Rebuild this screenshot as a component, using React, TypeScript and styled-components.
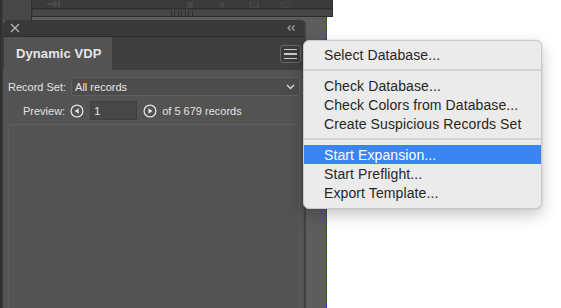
import React from "react";
import styled, { createGlobalStyle } from "styled-components";

const Global = createGlobalStyle`
  html, body { margin: 0; padding: 0; background: #ffffff; }
  body { font-family: "Liberation Sans", Arial, sans-serif; -webkit-font-smoothing: antialiased; }
`;

const Stage = styled.div`
  position: relative;
  width: 561px;
  height: 308px;
  overflow: hidden;
  display: flex;
  background: #ffffff;
`;

const LeftDock = styled.div`
  width: 3px;
  background: #383838;
  border-left: 1px solid #2c2c2c;
  box-sizing: border-box;
`;

const Pasteboard = styled.div`
  width: 323px;
  background: #5d5d5d;
  border-right: 1px dotted #1f1ff5;
`;

const Document = styled.div`
  flex: 1;
  background: #ffffff;
`;

/* top chrome: a docked window above the floating panel */
const TopChrome = styled.div`
  position: absolute;
  left: 3px;
  top: 0;
  display: flex;
  align-items: flex-start;
`;

const DockStub = styled.div`
  width: 28px;
  height: 20px;
  background: #474747;
  border-right: 1px solid #2e2e2e;
`;

const TopWindow = styled.div`
  width: 301px;
  height: 17px;
  display: flex;
  flex-direction: column;
  background: #3b3b3b;
  border-bottom: 1px solid #2d2d2d;
  border-right: 1px solid #2d2d2d;
  box-sizing: border-box;
`;

const TopToolbar = styled.div`
  height: 8px;
  display: flex;
  align-items: flex-end;
  padding-left: 14px;
  border-bottom: 1px solid #2e2e2e;
  overflow: hidden;
`;

const FaintIcon = styled.svg<{ $ml: number }>`
  margin-left: ${(p) => p.$ml}px;
  flex: none;
  display: block;
`;

const ScrollBar = styled.div`
  flex: 1;
  margin: 1px 0 0 1px;
  background: #474747;
  display: flex;
  justify-content: center;
  align-items: center;
`;

const Grip = styled.div`
  width: 24px;
  height: 5px;
  background: repeating-linear-gradient(
    to right,
    #2f2f2f 0px,
    #2f2f2f 1px,
    transparent 1px,
    transparent 3.5px
  );
`;

/* floating panel */
const Panel = styled.div`
  position: absolute;
  left: 3px;
  top: 20px;
  width: 303px;
  height: 300px;
  display: flex;
  flex-direction: column;
  background: #535353;
  border-radius: 5px 5px 0 0;
  border-right: 2px solid #414141;
  box-sizing: border-box;
  overflow: hidden;
  color: #e4e4e4;
  font-size: 11px;
`;

const PanelHeader = styled.div`
  height: 17px;
  flex: none;
  display: flex;
  align-items: center;
  justify-content: space-between;
  padding: 0 9px 0 7px;
  background: #393939;
  border-bottom: 1px solid #2c2c2c;
  box-sizing: border-box;
`;

const TabStrip = styled.div`
  height: 33px;
  flex: none;
  display: flex;
  align-items: stretch;
  justify-content: space-between;
  background: #3f3f3f;
  padding-left: 1px;
`;

const Tab = styled.div`
  width: 108px;
  display: flex;
  align-items: center;
  padding-left: 12px;
  box-sizing: border-box;
  background: #535353;
  font-size: 13px;
  font-weight: 700;
  color: #e6e6e6;
  letter-spacing: 0.1px;
`;

const MenuButton = styled.div`
  align-self: flex-start;
  margin: 8px 3px 0 0;
  width: 21px;
  height: 18px;
  box-sizing: border-box;
  border: 1px solid #676767;
  border-radius: 3px;
  background: #3b3b3b;
  display: flex;
  flex-direction: column;
  justify-content: center;
  align-items: center;
  gap: 3px;
`;

const MenuLine = styled.span`
  display: block;
  width: 13px;
  height: 1.5px;
  background: #c9c9c9;
`;

const Body = styled.div`
  flex: 1;
  display: flex;
  flex-direction: column;
  padding: 7px 4px 0 5px;
`;

const Row = styled.div<{ $indent?: number; $mt?: number }>`
  display: flex;
  align-items: center;
  padding-left: ${(p) => p.$indent ?? 0}px;
  margin-top: ${(p) => p.$mt ?? 0}px;
  gap: 5px;
  white-space: nowrap;
`;

const Label = styled.span`
  color: #e2e2e2;
`;

const Select = styled.div`
  flex: 1;
  height: 19px;
  box-sizing: border-box;
  border: 1px solid #5f5f5f;
  border-radius: 2px;
  background: #4c4c4c;
  display: flex;
  align-items: center;
  justify-content: space-between;
  padding: 0 4px 0 3px;
  color: #e8e8e8;
`;

const StepButton = styled.svg`
  flex: none;
  display: block;
`;

const NumberInput = styled.div`
  width: 47px;
  height: 19px;
  box-sizing: border-box;
  background: #474747;
  border: 1px solid #404040;
  display: flex;
  align-items: center;
  padding-left: 3px;
  margin: 0 1px 0 1px;
  color: #e8e8e8;
`;

const Well = styled.div`
  flex: 1;
  margin-top: 4px;
  border: 1px solid #5c5c5c;
  background: #535353;
`;

/* context menu */
const Menu = styled.div`
  position: absolute;
  left: 303px;
  top: 40px;
  width: 239px;
  padding: 4px 0 6px;
  box-sizing: border-box;
  background: #ebebeb;
  border: 1px solid #c9c9c9;
  border-radius: 6px;
  box-shadow: 0 6px 16px rgba(0, 0, 0, 0.22), 0 0 2px rgba(0, 0, 0, 0.15);
  font-size: 14px;
  color: #262626;
  overflow: hidden;
`;

const MenuItem = styled.div<{ $active?: boolean }>`
  height: 19px;
  display: flex;
  align-items: center;
  padding-left: 20px;
  white-space: nowrap;
  letter-spacing: 0.1px;
  background: ${(p) => (p.$active ? "#3b84f4" : "transparent")};
  color: ${(p) => (p.$active ? "#ffffff" : "#262626")};
`;

const Separator = styled.div`
  height: 12px;
  display: flex;
  align-items: center;
  &::after {
    content: "";
    flex: 1;
    height: 2px;
    background: #d3d3d3;
  }
`;

const CircleArrow = ({ dir }: { dir: "left" | "right" }) => (
  <StepButton width="14" height="14" viewBox="0 0 14 14">
    <circle cx="7" cy="7" r="5.9" fill="none" stroke="#e2e2e2" strokeWidth="1.3" />
    {dir === "left" ? (
      <path d="M8.7 4.3 L4.8 7 L8.7 9.7 Z" fill="#ededed" />
    ) : (
      <path d="M5.5 4.3 L9.4 7 L5.5 9.7 Z" fill="#ededed" />
    )}
  </StepButton>
);

export default function App() {
  return (
    <>
      <Global />
      <Stage>
        <LeftDock />
        <Pasteboard />
        <Document />

        <TopChrome>
          <DockStub />
          <TopWindow>
            <TopToolbar>
              <FaintIcon $ml={0} width="16" height="7" viewBox="0 0 16 7">
                <path d="M1 3 H10 M7 0 L11 3 L7 6 M13 0 V7" stroke="#4a4a4a" strokeWidth="2" fill="none" />
              </FaintIcon>
              <FaintIcon $ml={124} width="8" height="6" viewBox="0 0 8 6">
                <rect x="1" y="0" width="6" height="6" fill="#474747" />
              </FaintIcon>
              <FaintIcon $ml={23} width="10" height="5" viewBox="0 0 10 5">
                <path d="M1 0 L9 0 L5 5 Z" fill="#474747" />
              </FaintIcon>
              <FaintIcon $ml={22} width="10" height="6" viewBox="0 0 10 6">
                <rect x="1" y="0" width="8" height="5" fill="none" stroke="#4a4a4a" strokeWidth="1.4" />
              </FaintIcon>
              <FaintIcon $ml={22} width="10" height="6" viewBox="0 0 10 6">
                <rect x="1" y="0" width="8" height="5" fill="none" stroke="#474747" strokeWidth="1.2" />
              </FaintIcon>
            </TopToolbar>
            <ScrollBar>
              <Grip />
            </ScrollBar>
          </TopWindow>
        </TopChrome>

        <Panel>
          <PanelHeader>
            <svg width="10" height="10" viewBox="0 0 10 10">
              <path d="M1 1 L9 9 M9 1 L1 9" stroke="#b9b9b9" strokeWidth="1.2" />
            </svg>
            <svg width="8" height="6" viewBox="0 0 8 6">
              <path d="M3.5 0.5 L1 3 L3.5 5.5 M7.5 0.5 L5 3 L7.5 5.5" stroke="#a9a9a9" strokeWidth="1.1" fill="none" />
            </svg>
          </PanelHeader>
          <TabStrip>
            <Tab>Dynamic VDP</Tab>
            <MenuButton>
              <MenuLine />
              <MenuLine />
              <MenuLine />
            </MenuButton>
          </TabStrip>
          <Body>
            <Row>
              <Label>Record Set:</Label>
              <Select>
                <span>All records</span>
                <svg width="9" height="6" viewBox="0 0 9 6">
                  <path d="M1 1 L4.5 4.5 L8 1" stroke="#dcdcdc" strokeWidth="1.4" fill="none" />
                </svg>
              </Select>
            </Row>
            <Row $indent={15} $mt={5}>
              <Label>Preview:</Label>
              <CircleArrow dir="left" />
              <NumberInput>1</NumberInput>
              <CircleArrow dir="right" />
              <Label>of 5 679 records</Label>
            </Row>
            <Well />
          </Body>
        </Panel>

        <Menu>
          <MenuItem>Select Database...</MenuItem>
          <Separator />
          <MenuItem>Check Database...</MenuItem>
          <MenuItem>Check Colors from Database...</MenuItem>
          <MenuItem>Create Suspicious Records Set</MenuItem>
          <Separator />
          <MenuItem $active>Start Expansion...</MenuItem>
          <MenuItem>Start Preflight...</MenuItem>
          <MenuItem>Export Template...</MenuItem>
        </Menu>
      </Stage>
    </>
  );
}
